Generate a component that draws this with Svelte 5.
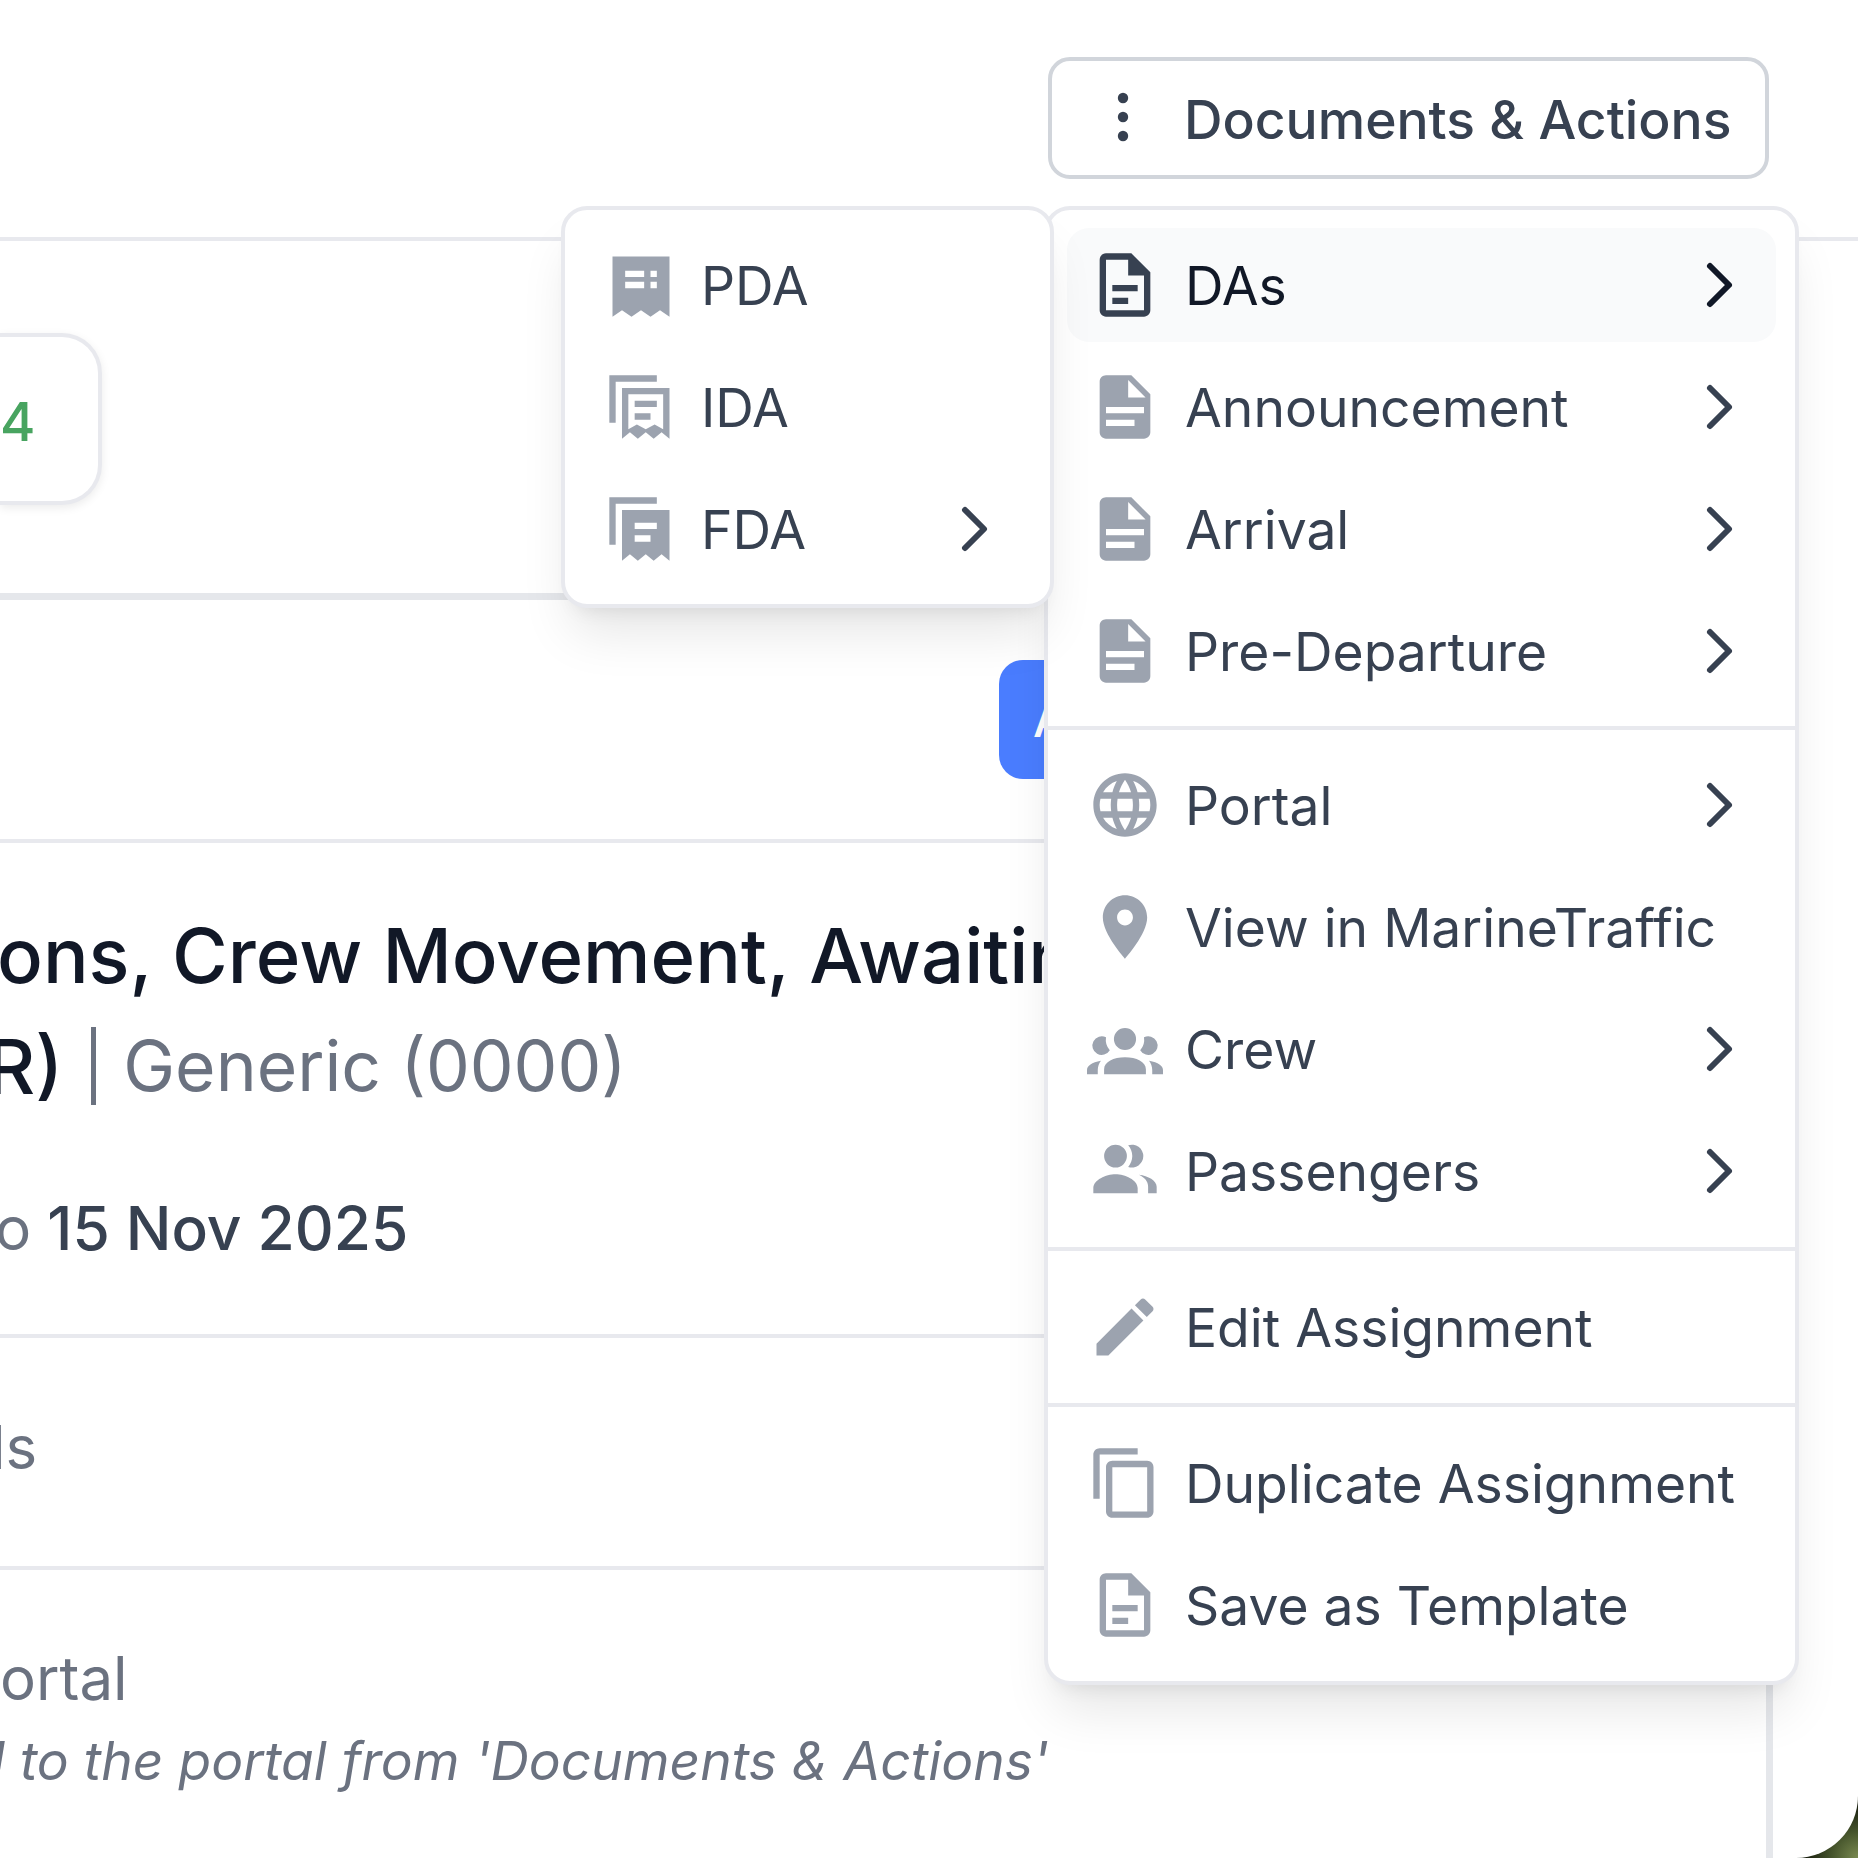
<script>
  const doc = 'M14 2H6c-1.1 0-2 .9-2 2v16c0 1.1.9 2 2 2h12c1.1 0 2-.9 2-2V8l-6-6z';
  const solidDoc = doc + 'M13 3.5V9h5.5zM6 12h12v2H6zM6 16h9v2H6z';
  const outlineDoc = doc + 'M6 4h7v5h5v11H6zM8 12h8v2H8zM8 16h5v2H8z';
  const backSheet = 'M2 2h15v2H4v13H2z';
  const receipt = 'M6 6h15v16l-2.5-2-2.5 2-2.5-2-2.5 2-2.5-2-2.5 2z';

  const icons = {
    da: outlineDoc,
    doc: solidDoc,
    save: outlineDoc,
    pda: 'M3 3h18v19l-3-2-3 2-3-2-3 2-3-2-3 2zM7 7.5h6v2H7zM15 7.5h2v2h-2zM7 11h6v2H7zM15 11h2v2h-2z',
    ida: backSheet + receipt + 'M8 8v11l2.7-1.5 2.8 1.5 2.8-1.5 2.7 1.5V8zM10 10h7v2h-7zM10 14h5v2h-5z',
    fda: backSheet + receipt + 'M10 10h7v2h-7zM10 14h5v2h-5z',
    globe: 'M11.99 2C6.47 2 2 6.48 2 12s4.47 10 9.99 10C17.52 22 22 17.52 22 12S17.52 2 11.99 2zm6.93 6h-2.95c-.32-1.25-.78-2.45-1.38-3.56 1.84.63 3.37 1.91 4.33 3.56zM12 4.04c.83 1.2 1.48 2.53 1.91 3.96h-3.82c.43-1.43 1.08-2.76 1.91-3.96zM4.26 14C4.1 13.36 4 12.69 4 12s.1-1.36.26-2h3.38c-.08.66-.14 1.32-.14 2 0 .68.06 1.34.14 2H4.26zm.82 2h2.95c.32 1.25.78 2.45 1.38 3.56-1.84-.63-3.37-1.9-4.33-3.56zm2.95-8H5.08c.96-1.66 2.49-2.93 4.33-3.56C8.81 5.55 8.35 6.75 8.03 8zM12 19.96c-.83-1.2-1.48-2.53-1.91-3.96h3.82c-.43 1.43-1.08 2.76-1.91 3.96zM14.34 14H9.66c-.09-.66-.16-1.32-.16-2 0-.68.07-1.35.16-2h4.68c.09.65.16 1.32.16 2 0 .68-.07 1.34-.16 2zm.25 5.56c.6-1.11 1.06-2.31 1.38-3.56h2.95c-.96 1.65-2.49 2.93-4.33 3.56zM16.36 14c.08-.66.14-1.32.14-2 0-.68-.06-1.34-.14-2h3.38c.16.64.26 1.31.26 2s-.1 1.36-.26 2h-3.38z',
    pin: 'M12 2C8.13 2 5 5.13 5 9c0 5.25 7 13 7 13s7-7.75 7-13c0-3.87-3.13-7-7-7zm0 9.5c-1.38 0-2.5-1.12-2.5-2.5s1.12-2.5 2.5-2.5 2.5 1.12 2.5 2.5-1.12 2.5-2.5 2.5z',
    crew: 'M12 5.35a3.5 3.5 0 1 1 0 7 3.5 3.5 0 0 1 0-7zM5.4 20v-1.6c0-2.4 3-3.8 6.6-3.8s6.6 1.4 6.6 3.8V20zM6 8.3A2.95 2.95 0 1 0 7.2 12.4 5 5 0 0 1 6 8.3zM18 8.3A2.95 2.95 0 1 1 16.8 12.4 5 5 0 0 0 18 8.3zM0 20v-1.4c0-1.3 1.5-2.4 4.4-2.9-.6.8-1 1.8-1 2.9V20zM24 20v-1.4c0-1.3-1.5-2.4-4.4-2.9.6.8 1 1.8 1 2.9V20z',
    people: 'M9 3.7a3.6 3.6 0 1 1 0 7.2 3.6 3.6 0 0 1 0-7.2zM2 19v-1.6C2 14.8 6 13 9 13s7 1.8 7 4.4V19zM13 3.9a3.6 3.6 0 1 1 0 6.8c.8-.9 1.3-2.1 1.3-3.4S13.8 4.8 13 3.9zM16.4 13.2c1.7.8 2.9 2 2.9 3.8v2H22v-2c0-2-2.7-3.4-5.6-3.8z',
    edit: 'M3 17.25V21h3.75L17.81 9.94l-3.75-3.75L3 17.25zM20.71 7.04c.39-.39.39-1.02 0-1.41l-2.34-2.34c-.39-.39-1.02-.39-1.41 0l-1.83 1.83 3.75 3.75 1.83-1.83z',
    copy: 'M16 1H4c-1.1 0-2 .9-2 2v14h2V3h12V1zm3 4H8c-1.1 0-2 .9-2 2v14c0 1.1.9 2 2 2h11c1.1 0 2-.9 2-2V7c0-1.1-.9-2-2-2zm0 16H8V7h11v14z'
  };

  const menuGroups = [
    [
      { label: 'DAs', icon: 'da', more: true, active: true },
      { label: 'Announcement', icon: 'doc', more: true },
      { label: 'Arrival', icon: 'doc', more: true },
      { label: 'Pre-Departure', icon: 'doc', more: true }
    ],
    [
      { label: 'Portal', icon: 'globe', more: true },
      { label: 'View in MarineTraffic', icon: 'pin' },
      { label: 'Crew', icon: 'crew', more: true },
      { label: 'Passengers', icon: 'people', more: true }
    ],
    [{ label: 'Edit Assignment', icon: 'edit' }],
    [
      { label: 'Duplicate Assignment', icon: 'copy' },
      { label: 'Save as Template', icon: 'save' }
    ]
  ];

  const daItems = [
    { label: 'PDA', icon: 'pda' },
    { label: 'IDA', icon: 'ida' },
    { label: 'FDA', icon: 'fda', more: true }
  ];
</script>

{#snippet row(item)}
  <div class="item" class:active={item.active}>
    <svg class="icon" viewBox="0 0 24 24"><path fill-rule="evenodd" d={icons[item.icon]} /></svg>
    <span class="label">{item.label}</span>
    {#if item.more}
      <svg class="chevron" viewBox="0 0 48 48"><path d="M14 5l19 19-19 19" /></svg>
    {/if}
  </div>
{/snippet}

<div class="page">
  <header class="topbar">
    <button class="actions">
      <svg class="dots" viewBox="0 0 12 50"><circle cx="6" cy="6" r="5.2" /><circle cx="6" cy="25" r="5.2" /><circle cx="6" cy="44" r="5.2" /></svg>
      <span>Documents &amp; Actions</span>
    </button>
  </header>

  <section class="stats">
    <div class="stat">4</div>
  </section>

  <main class="panel">
    <div class="toolbar">
      <button class="primary">Add</button>
    </div>

    <div class="summary">
      <h1>ons, Crew Movement, Awaiting</h1>
      <h2><span class="vessel">R)</span><span class="sep"></span><span class="client">Generic (0000)</span></h2>
      <p class="dates"><span class="to">o</span> 15 Nov 2025</p>
    </div>

    <div class="details">ls</div>

    <div class="portal">
      <div class="portal-title">ortal</div>
      <div class="portal-note">l to the portal from 'Documents &amp; Actions'</div>
    </div>
  </main>

  <div class="menu mainmenu">
    {#each menuGroups as group}
      <div class="group">
        {#each group as item}
          {@render row(item)}
        {/each}
      </div>
    {/each}
  </div>

  <div class="menu submenu">
    <div class="group">
      {#each daItems as item}
        {@render row(item)}
      {/each}
    </div>
  </div>
</div>

<style>
  :global(body) {
    background: radial-gradient(circle at 100% 100%, #7a8a50 0, #46552c 26px, #1a2010 52px);
    font-family: Inter, "Noto Sans", sans-serif;
  }

  .page {
    position: relative;
    width: 1858px;
    height: 1858px;
    overflow: hidden;
    background: #fff;
    border-bottom-right-radius: 62px;
    color: #374151;
  }

  .topbar {
    display: flex;
    justify-content: flex-end;
    height: 241px;
    padding: 57px 89px 0 0;
    box-sizing: border-box;
    border-bottom: 4px solid #e8e9ee;
  }

  .actions {
    display: flex;
    align-items: center;
    gap: 55px;
    width: 721px;
    height: 122px;
    padding: 3px 0 0 65px;
    box-sizing: border-box;
    background: #fff;
    border: 4px solid #d1d5db;
    border-radius: 22px;
    color: #374151;
    font: 500 53.4px Inter, sans-serif;
  }

  .dots {
    width: 12px;
    height: 50px;
    margin-top: -5px;
    fill: #374151;
  }

  .stats {
    display: flex;
    align-items: center;
    height: 352px;
  }

  .stat {
    width: 102px;
    height: 172px;
    margin-top: 4px;
    box-sizing: border-box;
    padding-right: 63px;
    background: #fff;
    border: 4px solid #e8e9ee;
    border-left: 0;
    border-radius: 0 40px 40px 0;
    box-shadow: 0 3px 10px rgba(0, 0, 0, 0.08);
    color: #48a460;
    font-size: 54px;
    font-weight: 500;
    line-height: 170px;
    text-align: right;
  }

  .panel {
    height: 1265px;
    margin-right: 85px;
    box-sizing: border-box;
    border-top: 7px solid #e5e7eb;
    border-right: 7px solid #e5e7eb;
  }

  .toolbar {
    display: flex;
    justify-content: flex-end;
    height: 243px;
    box-sizing: border-box;
    padding: 60px 40px 0 0;
    border-bottom: 4px solid #e8e9ee;
  }

  .primary {
    width: 727px;
    height: 119px;
    padding: 0 0 0 34px;
    background: #4a7dff;
    border: 0;
    border-radius: 24px;
    color: #fff;
    font: 500 48px Inter, sans-serif;
    text-align: left;
  }

  .summary {
    height: 495px;
    box-sizing: border-box;
    padding-top: 56px;
    border-bottom: 4px solid #e8e9ee;
  }

  h1 {
    margin: 0 0 0 -3px;
    color: #111827;
    font-size: 76px;
    font-weight: 500;
    line-height: 113px;
    white-space: nowrap;
  }

  h2 {
    display: flex;
    align-items: center;
    height: 108px;
    margin: 0;
    font-size: 69.5px;
    font-weight: 400;
    line-height: 108px;
  }

  .vessel {
    flex: none;
    margin-left: -14px;
    color: #111827;
    font-size: 76px;
    font-weight: 500;
    white-space: nowrap;
  }

  .sep {
    flex: none;
    width: 5px;
    height: 78px;
    margin: 0 27px 0 28px;
    background: #6b7280;
  }

  .client {
    color: #6b7280;
  }

  .dates {
    margin: 68px 0 0 -5px;
    color: #374151;
    font-size: 60.4px;
    font-weight: 500;
    line-height: 80px;
  }

  .to {
    color: #6b7280;
    font-weight: 400;
  }

  .details {
    height: 232px;
    box-sizing: border-box;
    margin-left: -9px;
    padding-top: 76px;
    border-bottom: 4px solid #e8e9ee;
    color: #6b7280;
    font-size: 60px;
    line-height: 66px;
  }

  .portal {
    padding-top: 73px;
    color: #6b7280;
  }

  .portal-title {
    font-size: 60px;
    line-height: 70px;
  }

  .portal-note {
    margin: 13px 0 0 -8px;
    font-size: 53.3px;
    font-style: italic;
    line-height: 70px;
    white-space: nowrap;
  }

  .menu {
    position: absolute;
    top: 206px;
    box-sizing: border-box;
    background: #fff;
    border: 4px solid #e8e9ee;
    border-radius: 26px;
    box-shadow: 0 34px 51px -10px rgba(0, 0, 0, 0.1), 0 14px 20px -14px rgba(0, 0, 0, 0.1);
  }

  .mainmenu {
    left: 1044px;
    width: 755px;
  }

  .submenu {
    left: 561px;
    width: 493px;
  }

  .group {
    display: flex;
    flex-direction: column;
    gap: 8px;
    padding: 19px 19px 19px 17px;
  }

  .mainmenu .group {
    padding-left: 19px;
  }

  .group:first-child {
    padding-top: 18px;
    padding-bottom: 18px;
  }

  .group:nth-child(2) {
    padding-top: 18px;
  }

  .group + .group {
    border-top: 4px solid #e8e9ee;
  }

  .item {
    display: flex;
    align-items: center;
    gap: 22px;
    height: 114px;
    padding: 0 19px 0 20px;
    border-radius: 22px;
    font-size: 53.4px;
    color: #374151;
    white-space: nowrap;
  }

  .item.active {
    background: #f9fafb;
    color: #111827;
  }

  .submenu .item {
    padding-left: 21px;
  }

  .icon {
    flex: none;
    width: 76px;
    height: 76px;
    fill: #9ca3af;
  }

  .active .icon {
    fill: #374151;
  }

  .chevron {
    width: 48px;
    height: 48px;
    margin-left: auto;
    margin-right: 13px;
    fill: none;
    stroke: currentColor;
    stroke-width: 6;
    stroke-linecap: round;
    stroke-linejoin: round;
  }
</style>
